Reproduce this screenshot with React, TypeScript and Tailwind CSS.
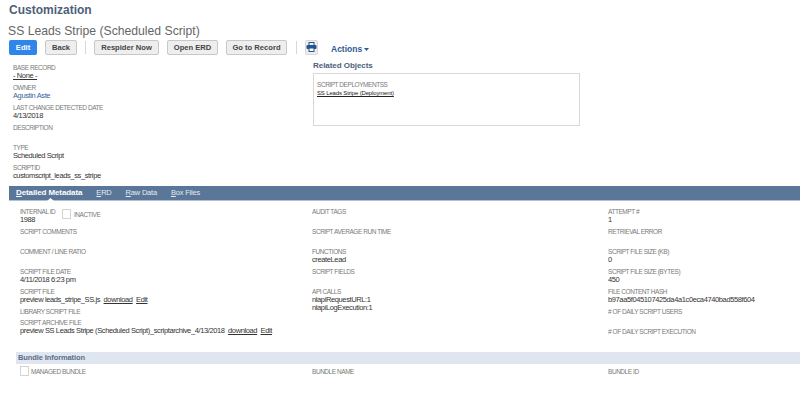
import React from 'react';

const font = { fontFamily: '"Liberation Sans", Arial, sans-serif' };

const Label = ({ children }: { children: React.ReactNode }) => (
  <span className="text-[6.5px] leading-[8px] tracking-[-0.45px] text-[#7a7a7a] uppercase whitespace-nowrap">{children}</span>
);

const Field = ({ label, value, h = 'h-[20px]' }: { label: string; value?: React.ReactNode; h?: string }) => (
  <div className={`${h} shrink-0`}>
    <div className="h-[8px] flex items-center"><Label>{label}</Label></div>
    {value && <div className="text-[7.5px] leading-[8px] tracking-[-0.38px] text-[#333] whitespace-nowrap">{value}</div>}
  </div>
);

const Btn = ({ children, w }: { children: React.ReactNode; w: string }) => (
  <button className={`${w} h-[15px] rounded-[2px] border border-[#c8c8c8] bg-[#eeeeee] text-[7.6px] font-bold text-[#444] flex items-center justify-center`}>
    {children}
  </button>
);

const Link = ({ children }: { children: React.ReactNode }) => <span className="underline">{children}</span>;

const Check = () => <span className="block w-[9px] h-[10px] border border-[#d4d4d4] bg-white shrink-0" />;

export default function App() {
  return (
    <div className="w-[800px] h-[402px] bg-white overflow-hidden" style={font}>
      <div className="pl-[9px] pt-[3px] h-[15px] text-[12px] leading-[14px] font-bold text-[#4d5f79]">Customization</div>
      <div className="pl-[8px] mt-[8px] h-[16px] text-[12.2px] leading-[16px] text-[#666]">SS Leads Stripe (Scheduled Script)</div>

      {/* toolbar */}
      <div className="mt-[1px] pl-[9px] h-[15px] flex items-center">
        <button className="w-[28px] h-[15px] rounded-[2px] bg-[#2f86ea] text-[7.6px] font-bold text-white">Edit</button>
        <div className="ml-[8px]"><Btn w="w-[32px]">Back</Btn></div>
        <div className="ml-[8px] w-px h-[13px] bg-[#d8d8d8]" />
        <div className="ml-[8px]"><Btn w="w-[65px]">Respider Now</Btn></div>
        <div className="ml-[8px]"><Btn w="w-[51px]">Open ERD</Btn></div>
        <div className="ml-[8px]"><Btn w="w-[61px]">Go to Record</Btn></div>
        <div className="ml-[9px] w-px h-[13px] bg-[#d8d8d8]" />
        <div className="ml-[8px] w-[13px] h-[15px] rounded-[2px] border border-[#d8d8d8] bg-[#eeeeee] flex items-start justify-center pt-[1px]">
          <svg width="11" height="10" viewBox="0 0 11 10">
            <rect x="3" y="0.5" width="5" height="3" fill="none" stroke="#24558f" strokeWidth="1" />
            <rect x="0.5" y="3" width="10" height="4" rx="1" fill="#24558f" />
            <rect x="3" y="6" width="5" height="3.5" fill="#fff" stroke="#24558f" strokeWidth="1" />
          </svg>
        </div>
        <div className="ml-[13px] mt-[3px] flex items-center text-[8.5px] font-bold text-[#2f5a94]">
          Actions
          <svg width="5" height="3" viewBox="0 0 5 3" className="ml-[2px] mt-[1px]">
            <path d="M0 0h5L2.5 3z" fill="#2f5a94" />
          </svg>
        </div>
      </div>

      {/* record header */}
      <div className="flex h-[131px]">
        <div className="w-[313px] pl-[13px] pt-[9px]">
          <Field label="Base Record" value={<Link>- None -</Link>} />
          <Field label="Owner" value={<span className="text-[#3b5f9a]">Agustin Aste</span>} />
          <Field label="Last Change Detected Date" value="4/13/2018" />
          <Field label="Description" />
          <Field label="Type" value="Scheduled Script" />
          <Field label="ScriptID" value="customscript_leads_ss_stripe" />
        </div>
        <div className="pt-[6px]">
          <div className="h-[12px] text-[8px] leading-[10px] tracking-[-0.05px] font-bold text-[#4d5f79]">Related Objects</div>
          <div className="w-[267px] h-[53px] border border-[#d8d8d8] pl-[3px] pt-[7px]">
            <div className="h-[8px] flex items-center"><Label>SCRIPT DEPLOYMENTSS</Label></div>
            <div className="text-[6px] leading-[8px] tracking-[-0.15px] text-[#222] underline">SS Leads Stripe (Deployment)</div>
          </div>
        </div>
      </div>

      {/* tabs */}
      <div className="relative ml-[9px] h-[15px] bg-[#5a7698] border-b border-[#b5c1d1] flex items-center text-[7.5px] tracking-[-0.2px] text-[#e4eaf2]">
        <span className="ml-[7px] text-[8px] tracking-[-0.1px] font-bold text-white"><span className="underline">D</span>etailed Metadata</span>
        <span className="ml-[14px]"><span className="underline">E</span>RD</span>
        <span className="ml-[14px]"><span className="underline">R</span>aw Data</span>
        <span className="ml-[14px]"><span className="underline">B</span>ox Files</span>
        <svg width="7" height="3" viewBox="0 0 7 3" className="absolute left-[38px] bottom-[-1px]">
          <path d="M0 3L3.5 0L7 3z" fill="#fff" />
        </svg>
      </div>

      {/* metadata columns */}
      <div className="flex pt-[7px] h-[151px]">
        <div className="w-[312px] pl-[20px]">
          <div className="h-[20px] flex">
            <div className="w-[42px]"><Field label="Internal ID" value="1988" /></div>
            <div className="mt-[1px] flex items-end h-[10px]">
              <Check />
              <span className="ml-[3px] h-[8px] flex items-center"><Label>INACTIVE</Label></span>
            </div>
          </div>
          <Field label="Script Comments" />
          <Field label="Comment / Line Ratio" />
          <Field label="Script File Date" value="4/11/2018 6:23 pm" />
          <Field label="Script File" value={<>preview leads_stripe_SS.js&nbsp; <Link>download</Link>&nbsp; <Link>Edit</Link></>} />
          <Field label="Library Script File" h="h-[11px]" />
          <Field label="Script Archive File" value={<>preview SS Leads Stripe (Scheduled Script)_scriptarchive_4/13/2018&nbsp; <Link>download</Link>&nbsp; <Link>Edit</Link></>} />
        </div>
        <div className="w-[296px]">
          <Field label="Audit Tags" />
          <Field label="Script Average Run Time" />
          <Field label="Functions" value="createLead" />
          <Field label="Script Fields" />
          <Field label="API Calls" value={<>nlapiRequestURL:1<br />nlapiLogExecution:1</>} />
        </div>
        <div>
          <Field label="Attempt #" value="1" />
          <Field label="Retrieval Error" />
          <Field label="Script File Size (KB)" value="0" />
          <Field label="Script File Size (Bytes)" value="450" />
          <Field label="File Content Hash" value="b97aa5f045107425da4a1c0eca4740bad558f604" />
          <Field label="# of Daily Script Users" />
          <Field label="# of Daily Script Execution" />
        </div>
      </div>

      {/* bundle */}
      <div className="ml-[16px] h-[12px] bg-[#e0e6ef] pl-[2px] text-[7.5px] tracking-[-0.1px] leading-[12px] font-bold text-[#5a6d88]">Bundle Information</div>
      <div className="flex pt-[2px]">
        <div className="w-[312px] pl-[20px] flex items-start">
          <Check />
          <span className="ml-[2px] mt-[2px] h-[8px] flex items-center"><Label>MANAGED BUNDLE</Label></span>
        </div>
        <div className="w-[296px] mt-[2px] h-[8px] flex items-center"><Label>BUNDLE NAME</Label></div>
        <div className="mt-[2px] h-[8px] flex items-center"><Label>BUNDLE ID</Label></div>
      </div>
    </div>
  );
}
